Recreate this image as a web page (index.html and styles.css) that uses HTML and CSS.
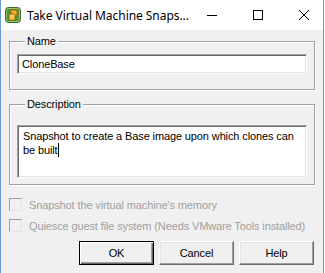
FILE: index.html
```html
<!DOCTYPE html>
<html lang="en">
    <head>
        <meta charset="UTF-8">
        <meta name="viewport" content="width=device-width, initial-scale=1.0">
        <title>Take Virtual Machine Snapshot</title>
        <link rel="stylesheet" href="styles.css">
    </head>

    <body>
        <div class="window">
            <div class="titlebar">
                <svg class="app-icon" width="16" height="16" viewBox="0 0 16 16"> <!--icone do vSphere-->
                    <rect x="0.5" y="0.5" width="15" height="15" rx="3" fill="#5a8f33" stroke="#3f6b22"/>
                    <rect x="1.5" y="1.5" width="13" height="13" rx="2" fill="none" stroke="#9cc46e"/>
                    <rect x="6" y="3" width="6" height="6" rx="1" fill="#f2b12b" stroke="#8a5a10" stroke-width="0.8"/>
                    <rect x="4" y="7" width="6" height="6" rx="1" fill="#f7cf4a" stroke="#8a5a10" stroke-width="0.8"/>
                </svg>
                <span class="title">Take Virtual Machine Snaps...</span>
                <div class="caption-buttons">
                    <span class="caption-btn">
                        <svg width="10" height="10" viewBox="0 0 10 10"><path d="M0 5.5h10" stroke="#000" stroke-width="1"/></svg>
                    </span>
                    <span class="caption-btn">
                        <svg width="10" height="10" viewBox="0 0 10 10"><rect x="0.5" y="0.5" width="9" height="9" fill="none" stroke="#000"/></svg>
                    </span>
                    <span class="caption-btn">
                        <svg width="10" height="10" viewBox="0 0 10 10"><path d="M0 0L10 10M10 0L0 10" stroke="#000" stroke-width="1"/></svg>
                    </span>
                </div>
            </div>

            <div class="dialog">
                <fieldset class="group group-name">
                    <legend>Name</legend>
                    <div class="field field-name">CloneBase</div>
                </fieldset>

                <fieldset class="group group-desc">
                    <legend>Description</legend>
                    <div class="field field-desc">Snapshot to create a Base image upon which clones can be built<span class="caret"></span></div>
                </fieldset>

                <div class="options">
                    <label class="check disabled"><span class="box"></span>Snapshot the virtual machine's memory</label>
                    <label class="check disabled"><span class="box"></span>Quiesce guest file system (Needs VMware Tools installed)</label>
                </div>

                <div class="buttons">
                    <button class="btn btn-default">OK</button>
                    <button class="btn">Cancel</button>
                    <button class="btn">Help</button>
                </div>
            </div>
        </div>
    </body>
</html>
```

FILE: styles.css
```css
*{
    box-sizing: border-box;
}

body{
    margin: 0;
    padding: 0;
    background: #ffffff;
    font-family: "Liberation Sans", Arial, sans-serif;
    font-size: 11px;
    letter-spacing: -0.12px;
    color: #000;
}

.window{
    width: 324px;
    height: 273px;
    display: flex;
    flex-direction: column;
    border-left: 1px solid #6f9bd0;
    border-right: 1px solid #6f9bd0;
    background: #f0f0f0;
}

.titlebar{
    height: 30px;
    display: flex;
    align-items: center;
    background: #ffffff;
}
.app-icon{
    margin-left: 4px;
    margin-right: 6px;
    flex: none;
}
.title{
    font-family: "Noto Sans", "Liberation Sans", sans-serif;
    font-size: 12px;
    letter-spacing: -0.05px;
    flex: 1;
    white-space: nowrap;
}
.caption-buttons{
    display: flex;
}
.caption-btn{
    width: 46px;
    height: 30px;
    display: flex;
    align-items: center;
    justify-content: center;
}

.dialog{
    flex: 1;
    padding: 0 8px;
    display: flex;
    flex-direction: column;
}

.group{
    margin: 0;
    border: 1px solid #a0a0a0;
    box-shadow: 1px 1px 0 #fff, inset 1px 1px 0 #fff;
    min-width: 0;
}
.group legend{
    padding: 0 2px;
    margin-left: 8px;
    line-height: 13px;
}
.group-name{
    margin-top: 5px;
    padding: 6px 7px 15px;
}
.group-desc{
    margin-top: 8px;
    padding: 14px 7px 6px;
}

.field{
    background: #fff;
    border-style: solid;
    border-width: 1px;
    border-color: #a0a0a0 #fff #fff #a0a0a0;
    box-shadow: inset 1px 1px 0 #696969, inset -1px -1px 0 #e3e3e3;
    padding: 2px 4px;
    line-height: 14px;
}
.field-name{
    height: 20px;
}
.field-desc{
    height: 53px;
    padding: 3px 5px;
}
.caret{
    display: inline-block;
    width: 1px;
    height: 14px;
    background: #000;
    vertical-align: top;
}

.options{
    margin-top: 13px;
    display: flex;
    flex-direction: column;
    gap: 8px;
}
.check{
    display: flex;
    align-items: center;
    gap: 7px;
    height: 13px;
}
.check.disabled{
    color: #a0a0a0;
}
.box{
    width: 13px;
    height: 13px;
    flex: none;
    background: #f0f0f0;
    border-style: solid;
    border-width: 1px;
    border-color: #a0a0a0 #e3e3e3 #e3e3e3 #a0a0a0;
}

.buttons{
    margin-top: 9px;
    display: flex;
    justify-content: flex-end;
    gap: 5px;
    padding-right: 1px;
}
.btn{
    width: 75px;
    height: 24px;
    padding: 0;
    font-family: inherit;
    font-size: 11px;
    letter-spacing: inherit;
    color: #000;
    background: #f0f0f0;
    border-style: solid;
    border-width: 1px;
    border-color: #fff #696969 #696969 #fff;
    box-shadow: inset -1px -1px 0 #a0a0a0, inset 1px 1px 0 #e3e3e3;
}
.btn-default{
    border: 1px solid #000;
    box-shadow: inset 1px 1px 0 #fff, inset -1px -1px 0 #696969, inset -2px -2px 0 #a0a0a0;
}
```
